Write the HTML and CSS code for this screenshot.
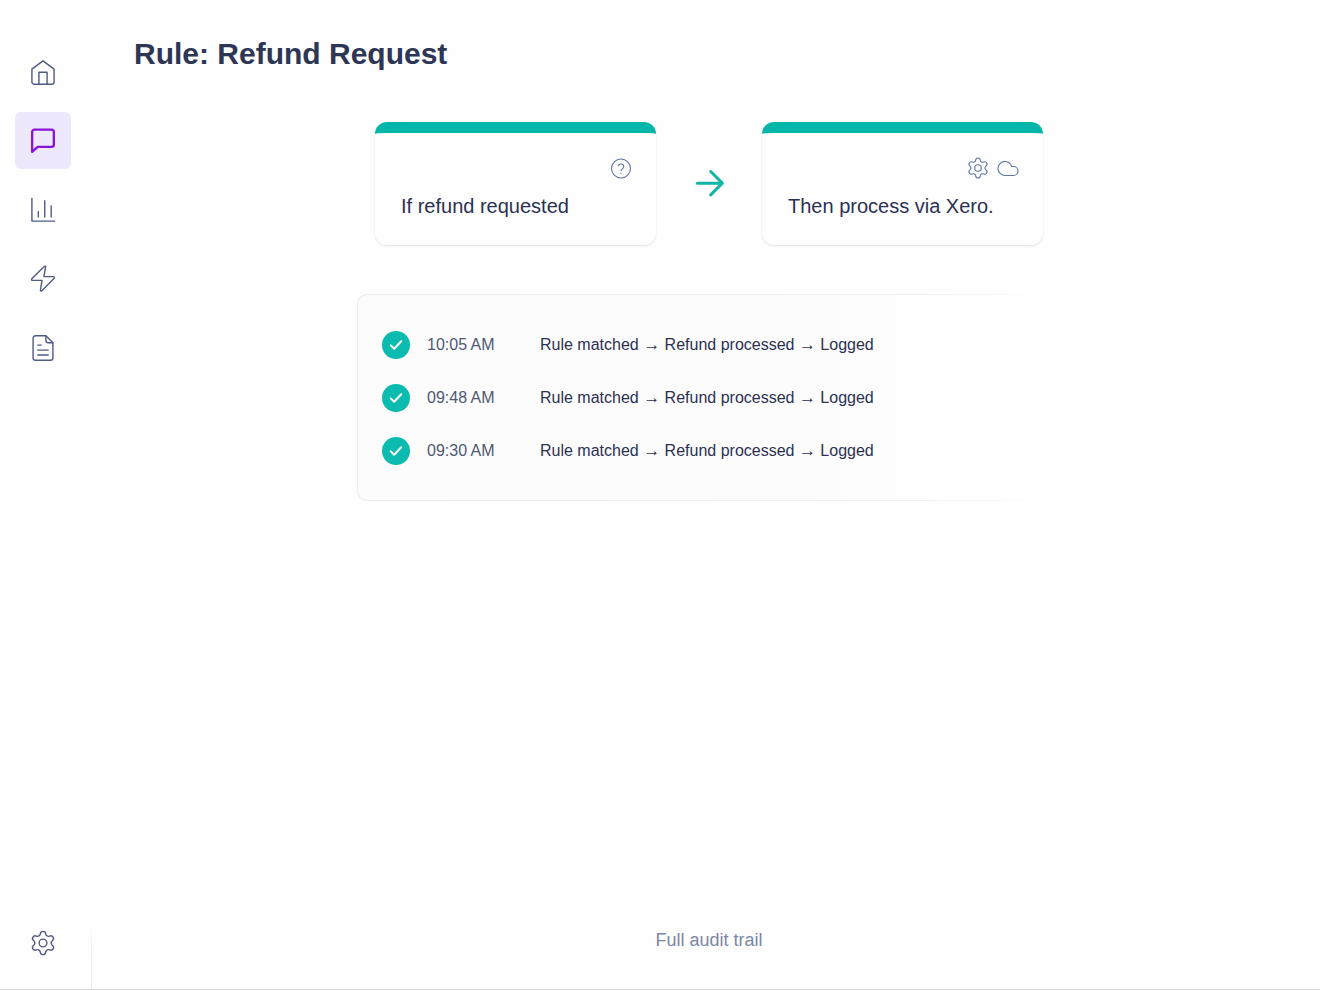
FILE: index.html
```html
<!DOCTYPE html>
<html lang="en">
<head>
<meta charset="utf-8">
<meta name="viewport" content="width=device-width, initial-scale=1">
<title>Rule: Refund Request</title>
<link rel="stylesheet" href="styles.css">
</head>
<body>
<svg class="sprite" aria-hidden="true">
  <symbol id="gear" viewBox="0 0 24 24"><path d="M9.671 4.136a2.34 2.34 0 0 1 4.659 0 2.34 2.34 0 0 0 3.319 1.915 2.34 2.34 0 0 1 2.33 4.033 2.34 2.34 0 0 0 0 3.831 2.34 2.34 0 0 1-2.33 4.033 2.34 2.34 0 0 0-3.319 1.915 2.34 2.34 0 0 1-4.659 0 2.34 2.34 0 0 0-3.32-1.915 2.34 2.34 0 0 1-2.33-4.033 2.34 2.34 0 0 0 0-3.831A2.34 2.34 0 0 1 6.35 6.051a2.34 2.34 0 0 0 3.319-1.915z"/><circle cx="12" cy="12" r="3.300"/></symbol>
  <symbol id="check" viewBox="0 0 24 24"><path d="M5 12.500l4.500 4.500L19 7"/></symbol>
</svg>
<div class="app">
  <nav class="sidebar" aria-label="Main">
    <a class="nav-item" href="#home" aria-label="Home"><svg class="icon icon-nav" viewBox="0 0 24 24"><path d="M2.500 9.500l9.500-7 9.500 7v11a2 2 0 0 1-2 2h-15a2 2 0 0 1-2-2z"/><path d="M8.500 22.500V12.200h7v10.300"/></svg></a>
    <a class="nav-item nav-item-active" href="#messages" aria-label="Messages" aria-current="page"><svg class="icon icon-nav" viewBox="0 0 24 24"><path d="M21.300 15a2 2 0 0 1-2 2H7.500l-4.800 4.300V4.200a2 2 0 0 1 2-2h14.600a2 2 0 0 1 2 2z"/></svg></a>
    <a class="nav-item" href="#reports" aria-label="Reports"><svg class="icon icon-nav" viewBox="0 0 24 24"><path d="M2.500 2v19.500h19.500M8 13.500v4.500M13.500 4v14M19 8.500v9.500"/></svg></a>
    <a class="nav-item" href="#automations" aria-label="Automations"><svg class="icon icon-nav" viewBox="0 0 24 24"><path d="M3 13.200a.8.8 0 0 1-.6-1.350L13 1.200a.7.7 0 0 1 1.200.650L12.800 10h8.200a.8.8 0 0 1 .6 1.350L11 22a.7.7 0 0 1-1.200-.650l1.400-8.150z"/></svg></a>
    <a class="nav-item" href="#documents" aria-label="Documents"><svg class="icon icon-nav" viewBox="0 0 24 24"><path d="M14.500 1.500H5.500a2 2 0 0 0-2 2v17a2 2 0 0 0 2 2h13a2 2 0 0 0 2-2V7.500z"/><path d="M14.500 1.500v4a2 2 0 0 0 2 2h4M7.500 9.500h3M7.500 13.800h9M7.500 18h9"/></svg></a>
    <a class="nav-item nav-item-last" href="#settings" aria-label="Settings"><svg class="icon icon-nav"><use href="#gear"/></svg></a>
  </nav>
  <main class="main">
    <h1 class="title">Rule: Refund Request</h1>
    <section class="flow" aria-label="Rule steps">
      <article class="card">
        <div class="card-icons"><svg class="icon icon-card" viewBox="0 0 24 24"><circle cx="12" cy="12.500" r="9.500"/><path d="M9.200 9.800a2.900 2.900 0 0 1 5.600.9c0 1.900-2.800 2.300-2.800 4M12 17.300v.1"/></svg></div>
        <p class="card-text">If refund requested</p>
      </article>
      <svg class="icon icon-arrow" viewBox="0 0 24 24" aria-hidden="true"><path d="M5 11.500h15M13 4.500l7 7-7 7"/></svg>
      <article class="card">
        <div class="card-icons"><svg class="icon icon-card"><use href="#gear"/></svg><svg class="icon icon-card" viewBox="0 0 24 24"><path d="M17.500 19.500H9a7 7 0 1 1 6.710-9h1.790a4.500 4.500 0 1 1 0 9z"/></svg></div>
        <p class="card-text">Then process via Xero.</p>
      </article>
    </section>
    <ol class="log" aria-label="Activity log">
      <li class="log-row"><span class="status"><svg class="icon icon-check"><use href="#check"/></svg></span><time class="log-time">10:05 AM</time><span class="log-text">Rule matched <span class="step">→</span> Refund processed <span class="step">→</span> Logged</span></li>
      <li class="log-row"><span class="status"><svg class="icon icon-check"><use href="#check"/></svg></span><time class="log-time">09:48 AM</time><span class="log-text">Rule matched <span class="step">→</span> Refund processed <span class="step">→</span> Logged</span></li>
      <li class="log-row"><span class="status"><svg class="icon icon-check"><use href="#check"/></svg></span><time class="log-time">09:30 AM</time><span class="log-text">Rule matched <span class="step">→</span> Refund processed <span class="step">→</span> Logged</span></li>
    </ol>
    <footer class="footer">Full audit trail</footer>
  </main>
</div>
</body>
</html>
```
FILE: styles.css
```css
* { box-sizing: border-box; }

body {
  margin: 0;
  background: #fefefe;
  color: #2b3152;
  font-family: "Liberation Sans", Arial, sans-serif;
}

.sprite { position: absolute; width: 0; height: 0; }

.app {
  display: flex;
  min-height: 100vh;
  border-bottom: 1px solid #dedcdd;
}

.icon {
  display: block;
  flex: none;
  fill: none;
  stroke: currentColor;
  stroke-linecap: round;
  stroke-linejoin: round;
}

.sidebar {
  display: flex;
  flex: none;
  flex-direction: column;
  gap: 12px;
  width: 92px;
  padding: 43px 20px 18px 15px;
  border-right: 1px solid;
  border-image: linear-gradient(transparent 93%, #ececf0 97%) 1;
}

.nav-item {
  display: grid;
  place-items: center;
  height: 57px;
  border-radius: 6px;
  color: #4f5b85;
}

.nav-item-active { background: #eee8fd; color: #8a14d8; }
.nav-item-last { margin-top: auto; }

.icon-nav { width: 28px; height: 28px; stroke-width: 1.2; }
.nav-item-active .icon-nav { stroke-width: 2; }

.main {
  display: flex;
  flex: 1;
  flex-direction: column;
  min-width: 0;
  padding: 36px 36px 37px 42px;
}

.title {
  margin: 0;
  color: #2d3655;
  font-size: 30px;
  line-height: 36px;
}

.flow {
  display: flex;
  align-items: center;
  justify-content: center;
  gap: 33px;
  margin-top: 50px;
}

.card {
  width: 281px;
  padding: 23px 23px 25px 26px;
  border-top: 11px solid #04b5a9;
  border-radius: 12px;
  background: #fefefe;
  box-shadow: 0 1px 2px #dfe0e4;
}

.card-icons { display: flex; justify-content: flex-end; gap: 6px; }
.icon-card { width: 24px; height: 24px; color: #5f76a6; stroke-width: 1.1; }

.card-text {
  margin: 12px 0 0;
  font-size: 20px;
  line-height: 28px;
}

.icon-arrow { width: 40px; height: 40px; color: #10b5a6; stroke-width: 1.8; }

.log {
  display: flex;
  flex-direction: column;
  align-self: center;
  gap: 25px;
  width: 100%;
  max-width: 704px;
  margin: 49px 0 0;
  padding: 36px 24px 35px;
  border: 1px solid transparent;
  border-radius: 10px;
  background:
    linear-gradient(90deg, #fcfcfc 65%, #fefefe 80%) padding-box,
    linear-gradient(90deg, #e9eaed, #eef1f2 80%, #fefefe 98%) border-box;
  list-style: none;
}

.log-row { display: flex; align-items: center; font-size: 16px; line-height: 24px; }

.status {
  display: grid;
  flex: none;
  place-items: center;
  width: 28px;
  height: 28px;
  margin-right: 17px;
  border-radius: 50%;
  background: #0cbbaf;
  color: #fff;
}

.icon-check { width: 18px; height: 18px; stroke-width: 2.6; }
.log-time { flex: none; width: 113px; color: #505873; }
.step { font-family: "Liberation Serif", serif; font-size: 17px; line-height: 1; }

.footer {
  margin-top: auto;
  color: #7d86a6;
  font-size: 18px;
  line-height: 24px;
  text-align: center;
}
```
